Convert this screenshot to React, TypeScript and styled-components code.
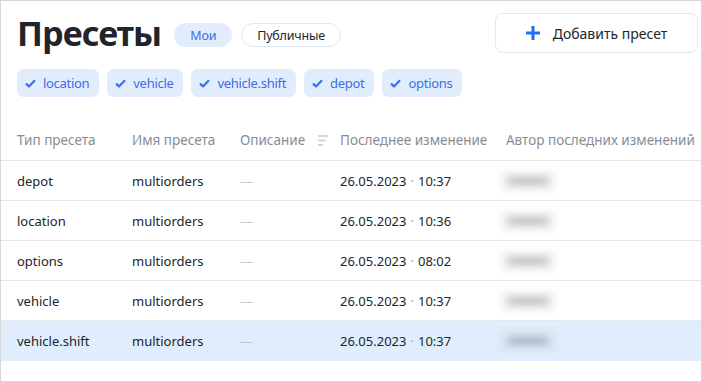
import React, { useState } from 'react';
import styled, { createGlobalStyle } from 'styled-components';

interface PresetRow {
  type: string;
  name: string;
  date: string;
  time: string;
}

const rows: PresetRow[] = [
  { type: 'depot', name: 'multiorders', date: '26.05.2023', time: '10:37' },
  { type: 'location', name: 'multiorders', date: '26.05.2023', time: '10:36' },
  { type: 'options', name: 'multiorders', date: '26.05.2023', time: '08:02' },
  { type: 'vehicle', name: 'multiorders', date: '26.05.2023', time: '10:37' },
  { type: 'vehicle.shift', name: 'multiorders', date: '26.05.2023', time: '10:37' },
];

const filters = ['location', 'vehicle', 'vehicle.shift', 'depot', 'options'];

const CheckIcon = () => (
  <svg width="11" height="9" viewBox="0 0 11 9" fill="none">
    <path d="M1 4.6 L4 7.4 L10 1.2" stroke="currentColor" strokeWidth="2.2" strokeLinejoin="round" />
  </svg>
);

const PlusIcon = () => (
  <svg width="14" height="14" viewBox="0 0 14 14">
    <rect x="5.5" y="0" width="3" height="14" fill="#1f6ff2" />
    <rect x="0" y="5.5" width="14" height="3" fill="#1f6ff2" />
  </svg>
);

const FilterIcon = () => (
  <svg width="10" height="11" viewBox="0 0 10 11">
    <rect x="0" y="0" width="10" height="2" fill="#d3d6db" />
    <rect x="0" y="4.5" width="7.5" height="2" fill="#d3d6db" />
    <rect x="0" y="9" width="5" height="2" fill="#d3d6db" />
  </svg>
);

const App: React.FC = () => {
  const [tab, setTab] = useState<'mine' | 'public'>('mine');
  const [selected] = useState<string>('vehicle.shift');

  return (
    <>
      <GlobalStyle />
      <Frame>
        <Header>
          <TitleGroup>
            <Title>Пресеты</Title>
            <Tab $active={tab === 'mine'} onClick={() => setTab('mine')}>
              Мои
            </Tab>
            <Tab $active={tab === 'public'} onClick={() => setTab('public')}>
              Публичные
            </Tab>
          </TitleGroup>
          <AddButton>
            <PlusIcon />
            Добавить пресет
          </AddButton>
        </Header>

        <Chips>
          {filters.map((f) => (
            <Chip key={f}>
              <CheckIcon />
              {f}
            </Chip>
          ))}
        </Chips>

        <Table>
          <HeadRow>
            <HeadCell>Тип пресета</HeadCell>
            <HeadCell>Имя пресета</HeadCell>
            <HeadCell>
              Описание
              <FilterSlot>
                <FilterIcon />
              </FilterSlot>
            </HeadCell>
            <HeadCell>Последнее изменение</HeadCell>
            <HeadCell>Автор последних изменений</HeadCell>
          </HeadRow>
          {rows.map((row) => (
            <BodyRow key={row.type} $selected={row.type === selected}>
              <Cell>{row.type}</Cell>
              <Cell>{row.name}</Cell>
              <Cell>
                <Dash>—</Dash>
              </Cell>
              <Cell>
                {row.date}
                <Dot>·</Dot>
                {row.time}
              </Cell>
              <Cell>
                <Blurred $selected={row.type === selected}>
                  <BlurBar $selected={row.type === selected} />
                </Blurred>
              </Cell>
            </BodyRow>
          ))}
        </Table>
      </Frame>
    </>
  );
};

const GlobalStyle = createGlobalStyle`
  html, body {
    margin: 0;
    padding: 0;
    background: #ffffff;
  }
  body {
    font-family: 'Noto Sans', 'Open Sans', Arial, sans-serif;
    color: #21252b;
  }
`;

const Frame = styled.div`
  box-sizing: border-box;
  width: 702px;
  height: 382px;
  border: 1px solid #d6d6d6;
  padding-top: 12px;
  overflow: hidden;
`;

const Header = styled.div`
  display: flex;
  justify-content: space-between;
  align-items: center;
  padding: 0 3px 0 16px;
  height: 40px;
`;

const TitleGroup = styled.div`
  display: flex;
  align-items: center;
  gap: 9px;
`;

const Title = styled.h1`
  margin: 0 4px 0 0;
  font-family: 'Noto Sans', sans-serif;
  font-size: 34px;
  font-weight: 700;
  letter-spacing: -0.9px;
  color: #21252b;
  line-height: 40px;
`;

const Tab = styled.button<{ $active: boolean }>`
  height: 24px;
  margin-top: 4px;
  padding: 0 15px;
  border-radius: 12px;
  border: 1px solid ${(p) => (p.$active ? '#e1edfd' : '#dde8f6')};
  background: ${(p) => (p.$active ? '#e1edfd' : '#ffffff')};
  color: ${(p) => (p.$active ? '#3a6fe6' : '#21252b')};
  font-family: 'Noto Sans', sans-serif;
  font-size: 12.5px;
  letter-spacing: -0.2px;
  cursor: pointer;
`;

const AddButton = styled.button`
  display: flex;
  align-items: center;
  justify-content: center;
  gap: 13px;
  box-sizing: border-box;
  width: 203px;
  height: 40px;
  border: 1px solid #e0e9f5;
  border-radius: 8px;
  background: #ffffff;
  font-family: 'Noto Sans', sans-serif;
  font-size: 14px;
  color: #21252b;
  cursor: pointer;
`;

const Chips = styled.div`
  display: flex;
  gap: 8px;
  padding: 0 16px;
  margin-top: 16px;
`;

const Chip = styled.div`
  display: flex;
  align-items: center;
  gap: 7px;
  height: 28px;
  padding: 0 10px 0 8px;
  border-radius: 7px;
  background: #e1edfd;
  color: #3a6fe6;
  font-size: 13px;
  letter-spacing: -0.3px;
`;

const Table = styled.div`
  margin-top: 23px;
`;

const rowGrid = `
  display: grid;
  grid-template-columns: 131px 108px 100px 166px 1fr;
  align-items: center;
  height: 40px;
`;

const HeadRow = styled.div`
  ${rowGrid}
  border-bottom: 1px solid #e4e6e9;
`;

const HeadCell = styled.div`
  display: flex;
  align-items: center;
  font-size: 13.5px;
  color: #878d97;
  white-space: nowrap;

  &:first-child {
    padding-left: 16px;
  }
`;

const FilterSlot = styled.span`
  display: flex;
  margin-left: 13px;
`;

const BodyRow = styled.div<{ $selected: boolean }>`
  ${rowGrid}
  box-sizing: border-box;
  background: ${(p) => (p.$selected ? '#e0edfc' : '#ffffff')};
  border-bottom: ${(p) => (p.$selected ? 'none' : '1px solid #e4e6e9')};
`;

const Cell = styled.div`
  font-size: 13px;
  color: #21252b;
  white-space: nowrap;

  &:first-child {
    padding-left: 16px;
  }
`;

const Dash = styled.span`
  color: #c5c9cf;
`;

const Dot = styled.span`
  color: #a0a4aa;
  margin: 0 4px;
`;

const Blurred = styled.div<{ $selected: boolean }>`
  width: 54px;
  height: 20px;
  display: flex;
  align-items: center;
  justify-content: center;
  background: ${(p) => (p.$selected ? '#d6e1ee' : '#efefef')};
  filter: blur(3px);
  margin-left: -5px;
`;

const BlurBar = styled.div<{ $selected: boolean }>`
  width: 38px;
  height: 8px;
  background: ${(p) => (p.$selected ? '#aebacb' : '#c6c6c6')};
`;

export default App;
